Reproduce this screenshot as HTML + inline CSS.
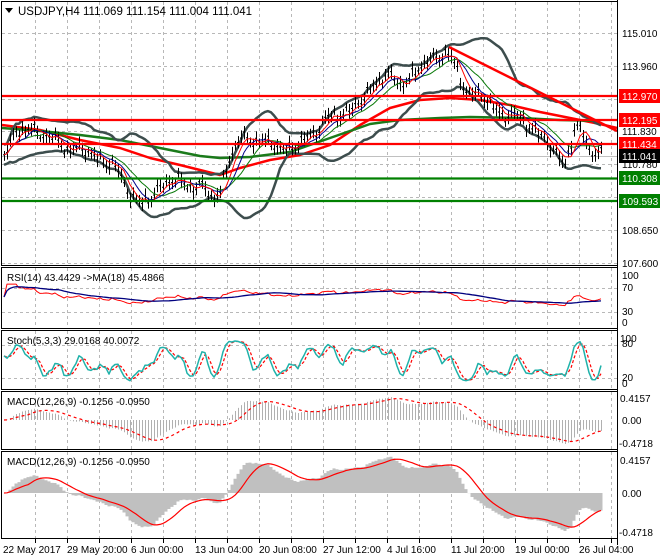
<!DOCTYPE html>
<html><head><meta charset="utf-8"><style>
html,body{margin:0;padding:0;background:#fff;width:660px;height:560px;overflow:hidden}
svg{display:block}
text{font-family:"Liberation Sans",sans-serif;font-size:10px;fill:#000}
</style></head><body>
<svg id="s" width="660" height="560" xmlns="http://www.w3.org/2000/svg">
<rect x="0" y="0" width="660" height="560" fill="#fff"/>
<g id="grid"></g>
<g id="draw"></g>
<g fill="none" stroke="#000" stroke-width="1">
<rect x="1.5" y="1.5" width="616" height="264"/>
<rect x="1.5" y="267.5" width="616" height="61"/>
<rect x="1.5" y="330.5" width="616" height="59"/>
<rect x="1.5" y="391.5" width="616" height="58"/>
<rect x="1.5" y="451.5" width="616" height="87"/>
<line x1="617.5" y1="0" x2="617.5" y2="545"/>
</g>
<path d="M5 8 L13 8 L9 13 Z" fill="#000"/>
<text x="18" y="15" style="font-size:11.5px">USDJPY,H4  111.069 111.154 111.004 111.041</text>
<text x="7" y="281">RSI(14) 43.4429  -&gt;MA(18) 45.4866</text>
<text x="7" y="344">Stoch(5,3,3) 29.0168 40.0072</text>
<text x="7" y="405">MACD(12,26,9) -0.1256 -0.0950</text>
<text x="7" y="465">MACD(12,26,9) -0.1256 -0.0950</text>
<g>
<text x="622" y="37">115.010</text>
<text x="622" y="70">113.960</text>
<text x="622" y="135">111.830</text>
<text x="622" y="168">110.780</text>
<text x="622" y="234">108.650</text>
<text x="622" y="267">107.600</text>
<rect x="619" y="89" width="41" height="14" fill="#ff0000"/><text x="622" y="100" style="fill:#fff">112.970</text>
<rect x="619" y="113" width="41" height="14" fill="#ff0000"/><text x="622" y="124" style="fill:#fff">112.195</text>
<rect x="619" y="137" width="41" height="14" fill="#ff0000"/><text x="622" y="148" style="fill:#fff">111.434</text>
<rect x="619" y="149" width="41" height="14" fill="#000"/><text x="622" y="160" style="fill:#fff">111.041</text>
<rect x="619" y="171" width="41" height="14" fill="#008000"/><text x="622" y="182" style="fill:#fff">110.308</text>
<rect x="619" y="194" width="41" height="14" fill="#008000"/><text x="622" y="205" style="fill:#fff">109.593</text>
<text x="622" y="279">100</text><text x="622" y="291">70</text><text x="622" y="315">30</text><text x="622" y="326">0</text>
<text x="620" y="342">100</text><text x="622" y="347">80</text><text x="622" y="381">20</text><text x="622" y="387">0</text>
<text x="620" y="402">0.4157</text><text x="622" y="424">0.00</text><text x="619" y="447">-0.4718</text>
<text x="620" y="464">0.4157</text><text x="622" y="497">0.00</text><text x="619" y="536">-0.4718</text>
</g>
<g>
<text x="3" y="553">22 May 2017</text>
<text x="67" y="553">29 May 20:00</text>
<text x="131" y="553">6 Jun 00:00</text>
<text x="195" y="553">13 Jun 04:00</text>
<text x="259" y="553">20 Jun 08:00</text>
<text x="323" y="553">27 Jun 12:00</text>
<text x="387" y="553">4 Jul 16:00</text>
<text x="451" y="553">11 Jul 20:00</text>
<text x="515" y="553">19 Jul 00:00</text>
<text x="579" y="553">26 Jul 04:00</text>
</g>
</svg>
<script>
(function(){
var NS="http://www.w3.org/2000/svg";
var G=document.getElementById('grid'),D=document.getElementById('draw');
function el(p,t,a){var e=document.createElementNS(NS,t);for(var k in a)e.setAttribute(k,a[k]);p.appendChild(e);return e;}
function line(p,x1,y1,x2,y2,c,w,d){var a={x1:x1,y1:y1,x2:x2,y2:y2,stroke:c,'stroke-width':w};if(d)a['stroke-dasharray']=d;return el(p,'line',a);}
function pl(p,pts,c,w,d){var s=pts.map(function(q){return q[0].toFixed(1)+','+q[1].toFixed(1)}).join(' ');var a={points:s,fill:'none',stroke:c,'stroke-width':w,'stroke-linejoin':'round'};if(d)a['stroke-dasharray']=d;return el(p,'polyline',a);}
var panels=[[2,265],[268,329],[331,390],[392,450],[452,538]];
for(var x=35;x<617;x+=32){panels.forEach(function(p){line(G,x+.5,p[0],x+.5,p[1],'#b8b8b8',1,'3,3');});line(G,x+.5,539,x+.5,543,'#000',1);}
[33,66,99,131,164,197,230,263].forEach(function(y){line(G,2,y+.5,617,y+.5,'#b8b8b8',1,'3,3');});
[288,312].forEach(function(y){line(G,2,y+.5,617,y+.5,'#b8b8b8',1,'3,3');});
[345,378].forEach(function(y){line(G,2,y+.5,617,y+.5,'#b8b8b8',1,'3,3');});
var K=[[4,150],[15,135],[30,128],[45,135],[60,145],[80,150],[100,158],[112,165],[125,185],[140,205],[150,200],[160,185],[170,180],[185,185],[200,185],[212,200],[220,190],[230,155],[240,140],[255,138],[270,145],[285,148],[300,145],[315,130],[325,120],[340,115],[355,105],[365,100],[375,80],[385,75],[400,85],[415,72],[430,60],[447,50],[455,70],[465,90],[480,95],[495,110],[510,115],[530,125],[545,140],[555,155],[565,160],[575,130],[583,135],[590,150],[603,155]];
function interp(x){for(var i=0;i<K.length-1;i++){if(x>=K[i][0]&&x<=K[i+1][0]){var t=(x-K[i][0])/(K[i+1][0]-K[i][0]);return K[i][1]+t*(K[i+1][1]-K[i][1]);}}return K[K.length-1][1];}
var bars=[];var n=0;
for(var x=4;x<=603;x+=3){var y=interp(x)+3*Math.sin(n*1.7)+2.5*Math.sin(n*0.61+1)+2*Math.sin(n*2.9)+3*Math.sin(n*0.9+2);var r=3+3*Math.abs(Math.sin(n*0.77+0.3));bars.push({x:x,c:y,h:y-r-Math.abs(2*Math.sin(n*1.3)),l:y+r+Math.abs(2*Math.cos(n*0.9))});n++;}
function hl(y,c){line(D,2,y,617,y,c,2.2);}
line(D,2,156.5,617,156.5,'#c0c0c0',1);
pl(D,[[2,125],[40,130],[80,140],[120,148],[150,158],[180,165],[200,170],[220,175],[240,168],[270,160],[300,155],[330,145],[360,125],[390,108],[420,100],[450,98],[480,100],[510,105],[540,112],[570,118],[600,124],[617,128]],'#ff0000',2.5);
pl(D,[[2,128],[40,131],[80,135],[120,140],[160,148],[200,156],[220,158],[250,157],[290,152],[330,138],[370,124],[400,120],[440,118],[470,117],[520,118],[560,120],[600,121]],'#1a7a1a',2.5);
var cl=bars.map(function(b){return b.c});
function sma(a,p,i){var s=0,c=0;for(var j=Math.max(0,i-p+1);j<=i;j++){s+=a[j];c++;}return s/c;}
var up=[],lo=[],m5=[],m8=[],m13=[];
for(var i=0;i<bars.length;i++){var m=sma(cl,20,i);var v=0,c=0;for(var j=Math.max(0,i-19);j<=i;j++){v+=(cl[j]-m)*(cl[j]-m);c++;}var sd=Math.sqrt(v/c);sd=Math.max(sd,5);up.push([bars[i].x,m-2*sd]);lo.push([bars[i].x,m+2*sd]);m5.push([bars[i].x,sma(cl,5,i)]);m8.push([bars[i].x,sma(cl,8,i)]);m13.push([bars[i].x,sma(cl,13,i)]);}
pl(D,up,'#3d4d4d',2.5);pl(D,lo,'#3d4d4d',2.5);
bars.forEach(function(b){line(D,b.x+.5,b.h,b.x+.5,b.l,'#000',1);line(D,b.x-1,b.c,b.x+.5,b.c,'#000',1);});
pl(D,m13,'#0a7a0a',1);pl(D,m8,'#00008b',1);pl(D,m5,'#ff0000',1);
hl(96,'#ff0000');hl(120,'#ff0000');hl(144,'#ff0000');hl(178.5,'#008000');hl(201,'#008000');
line(D,449,47,617,131,'#ff0000',2.5);
var P=cl.map(function(y){return -y;});
var rsi=[],ag=0,al=0;
for(var i=0;i<P.length;i++){if(i==0){rsi.push(50);continue;}var d=P[i]-P[i-1];var g=d>0?d:0,l=d<0?-d:0;if(i<=14){ag+=g/14;al+=l/14;}else{ag=(ag*13+g)/14;al=(al*13+l)/14;}var rs=al==0?100:ag/al;rsi.push(100-100/(1+rs));}
var rsm=rsi.map(function(v,i){return sma(rsi,18,i);});
function ry(v){v=52+(v-50)*0.55;return 322-v*0.48;}
pl(D,rsi.map(function(v,i){return[bars[i].x,ry(v)]}),'#ff0000',1);
pl(D,rsm.map(function(v,i){return[bars[i].x,ry(v)]}),'#00007f',1.3);
var kr=[];for(var i=0;i<P.length;i++){var hh=-1e9,ll=1e9;for(var j=Math.max(0,i-4);j<=i;j++){hh=Math.max(hh,-bars[j].h);ll=Math.min(ll,-bars[j].l);}kr.push(hh==ll?50:100*(P[i]-ll)/(hh-ll));}
var k=kr.map(function(v,i){return sma(kr,3,i)}),dd=k.map(function(v,i){return sma(k,3,i)});
function sy(v){return 389-v*0.55;}
pl(D,dd.map(function(v,i){return[bars[i].x,sy(v)]}),'#ff0000',1.2,'3,2');
pl(D,k.map(function(v,i){return[bars[i].x,sy(v)]}),'#20b2aa',1.5);
function ema(a,p){var r=[],k2=2/(p+1);for(var i=0;i<a.length;i++)r.push(i?a[i]*k2+r[i-1]*(1-k2):a[i]);return r;}
var e12=ema(P,12),e26=ema(P,26);var mac=e12.map(function(v,i){return v-e26[i]});
var sig=mac.map(function(v,i){return sma(mac,9,i)});
var mx=0;mac.forEach(function(v){mx=Math.max(mx,Math.abs(v))});
bars.forEach(function(b,i){var v=mac[i]/mx;line(D,b.x+.5,420,b.x+.5,420-v*24,'#b0b0b0',1);});
pl(D,sig.map(function(v,i){return[bars[i].x,420-v/mx*24]}),'#ff0000',1.2,'3,3');
var area=[[bars[0].x,493]];bars.forEach(function(b,i){area.push([b.x-1.5,493-mac[i]/mx*38]);area.push([b.x+1.5,493-mac[i]/mx*38]);});area.push([bars[bars.length-1].x+1.5,493]);
el(D,'polygon',{points:area.map(function(q){return q[0]+','+q[1]}).join(' '),fill:'#c0c0c0'});
pl(D,sig.map(function(v,i){return[bars[i].x,493-v/mx*38]}),'#ff0000',1.2);
})();
</script>
</body></html>
